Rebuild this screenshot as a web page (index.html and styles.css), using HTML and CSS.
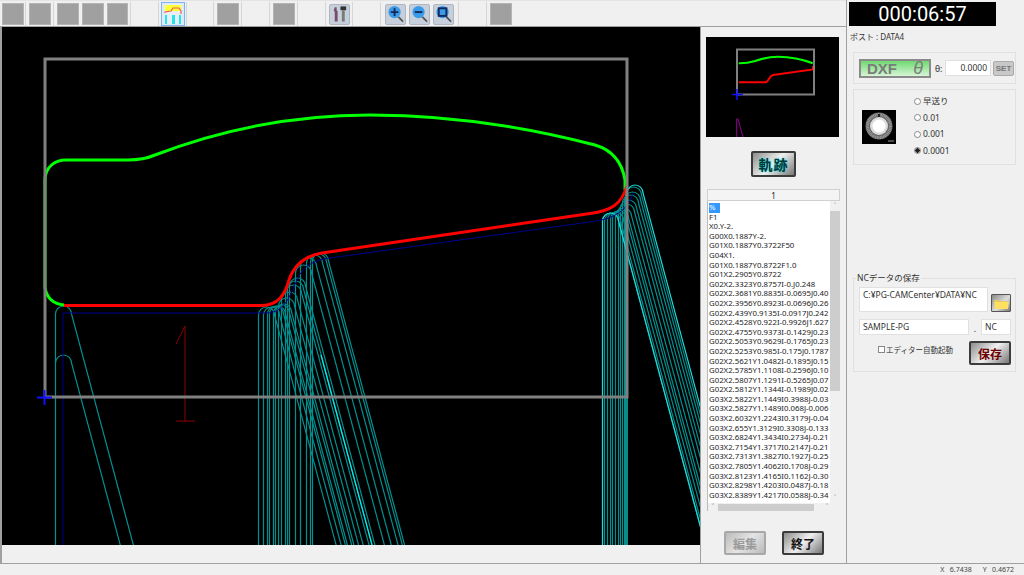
FILE: index.html
```
<!DOCTYPE html>
<html lang="ja">
<head>
<meta charset="utf-8">
<title>PG-CAM</title>
<link rel="stylesheet" href="styles.css">
</head>
<body>
<div class="window">
  <div class="main">
    <div class="left">
      <div class="toolbar">
        <div class="slot s26"><span class="gbtn"></span></div>
        <div class="slot s28"><span class="gbtn"></span></div>
        <div class="slot s77"><span class="gbtn"></span><span class="gbtn"></span><span class="gbtn w21"></span></div>
        <div class="slot s28"></div>
        <div class="slot s28">
          <span class="tbtn active">
            <svg width="18" height="20" viewBox="0 0 18 20"><rect width="18" height="20" fill="#e8eef6"/><path d="M1 1h16v6H1z" fill="#ffff33"/><path d="M1 11h2v9H1zM8 11h3v9H8zM15 11h2v9h-2z" fill="#22e4ee"/><path d="M1 9V8l6-1 2-3h6l2 3v3" fill="none" stroke="#f05a50" stroke-width="1.2"/></svg>
          </span>
        </div>
        <div class="slot s27"></div>
        <div class="slot s28"><span class="gbtn"></span></div>
        <div class="slot s28"></div>
        <div class="slot s28"><span class="gbtn"></span></div>
        <div class="slot s28"></div>
        <div class="slot s27">
          <span class="tbtn plain">
            <svg width="20" height="20" viewBox="0 0 20 20"><path d="M5 3h2v3l1 1v11H5V8L4 6z" fill="#7a4a68"/><rect x="11" y="2" width="6" height="4" fill="#333"/><rect x="12.500" y="6" width="3" height="12" fill="#7c7c74"/></svg>
          </span>
        </div>
        <div class="slot s28"></div>
        <div class="slot s78">
          <span class="tbtn plain">
            <svg width="20" height="20" viewBox="0 0 20 20"><path d="M13 13l5 5" stroke="#555" stroke-width="2"/><circle cx="9" cy="8" r="6.500" fill="#3a9be8"/><path d="M5 8h8M9 4v8" stroke="#14285a" stroke-width="2"/></svg>
          </span>
          <span class="tbtn plain">
            <svg width="20" height="20" viewBox="0 0 20 20"><path d="M13 13l5 5" stroke="#555" stroke-width="2"/><circle cx="9" cy="8" r="6.500" fill="#3a9be8"/><path d="M5 8h8" stroke="#14285a" stroke-width="2"/></svg>
          </span>
          <span class="tbtn plain">
            <svg width="20" height="20" viewBox="0 0 20 20"><path d="M13 13l5 5" stroke="#555" stroke-width="2"/><circle cx="9" cy="8" r="6.500" fill="#3a9be8"/><rect x="5" y="4" width="8" height="8" fill="none" stroke="#14285a" stroke-width="2"/></svg>
          </span>
        </div>
        <div class="slot s28"></div>
        <div class="slot s27 last"><span class="gbtn"></span></div>
      </div>
      <div class="work">
        <svg class="canvas" width="698" height="518" viewBox="2 27 698 518">
          <defs>
            <path id="a" d="M0 620V8A8 8 0 0 1 16 8L180 620"/>
            <path id="b" d="M0 8A8 8 0 0 1 16 8L180 620"/>
          </defs>
          <rect x="2" y="27" width="698" height="518" fill="#000"/>
          <g class="teal">
            <use href="#a" x="55.500" y="306"/>
            <use href="#b" x="55.500" y="355"/>
            <use href="#a" x="258.500" y="307"/><use href="#a" x="263.500" y="307"/><use href="#a" x="267.500" y="306"/>
            <use href="#a" x="269.500" y="306"/><use href="#a" x="273.500" y="305"/><use href="#a" x="275.500" y="304"/>
            <use href="#a" x="278.500" y="298"/><use href="#a" x="281.500" y="292"/><use href="#a" x="285.500" y="285"/>
            <use href="#a" x="287.500" y="281"/><use href="#a" x="289.500" y="278"/><use href="#a" x="295.500" y="265"/>
            <use href="#a" x="300.500" y="258"/><use href="#a" x="306.500" y="255"/><use href="#a" x="310.500" y="254"/>
            <use href="#a" x="312.500" y="253"/>
            <use href="#a" x="602.500" y="213"/><use href="#a" x="604.500" y="213"/><use href="#a" x="607.500" y="212"/>
            <use href="#a" x="610.500" y="211"/><use href="#a" x="612.500" y="210"/>
            <use href="#a" x="615.500" y="208"/><use href="#a" x="618.500" y="204"/><use href="#a" x="620.500" y="200"/>
            <use href="#a" x="622.500" y="195"/><use href="#a" x="624.500" y="192"/><use href="#a" x="625.500" y="187"/>
          </g>
          <g class="bright">
            <use href="#a" x="602.500" y="213"/><use href="#a" x="627" y="185"/>
          </g>
          <path class="highlight" d="M321 355L333 400L372 545"/>
          <path class="navy" d="M63 545V313H266C285 313 290 295 297 280C303 265 315 260 330 258L590 222C615 219 628 210 633 193"/>
          <path class="darkred" d="M176 344L185 326V421M176 421H195"/>
          <path class="green" d="M64 305C54 304 47 298 45 288V180C45 168 54 160 66 160H128C140 160 148 158 155 155C220 130 290 115 370 115C450 115 530 128 595 145C612 150 622 162 625 180V190"/>
          <path class="red" d="M64 305.500H262C278 305 285 295 289 280C294 265 305 256 322 253L590 213.500C610 211 622 205 627 185"/>
          <rect class="frame" x="45" y="59" width="582" height="338"/>
          <path class="cross" d="M37 397.500H52M44.500 390V405"/>
        </svg>
        <div class="mid">
          <svg class="mini" width="133" height="100" viewBox="706 37 133 100">
            <rect x="706" y="37" width="133" height="100" fill="#000"/>
            <path class="m-purple" d="M736.700 137V119H738L743 137"/>
            <path class="m-green" d="M738.700 63.300C745 63.500 750 62.500 755 61C765 57.500 772 56.700 778 56.700C790 56.700 802 59 812.700 63.300"/>
            <path class="m-red" d="M738.700 82.300H766C769 81 769 76 773 75L813 69.500V66"/>
            <rect class="m-frame" x="737" y="49.500" width="77" height="45"/>
            <path class="m-cross" d="M732 94.500H743M737 89V100"/>
          </svg>
          <div class="center-btn"><button class="hbtn trace">軌跡</button></div>
          <div class="listbox">
            <div class="list-head">1</div>
            <div class="list-body">
              <div class="rows">
                <div class="row"><span class="sel">%</span></div>
                <div class="row">F1</div>
                <div class="row">X0.Y-2.</div>
                <div class="row">G00X0.1887Y-2.</div>
                <div class="row">G01X0.1887Y0.3722F50</div>
                <div class="row">G04X1.</div>
                <div class="row">G01X0.1887Y0.8722F1.0</div>
                <div class="row">G01X2.2905Y0.8722</div>
                <div class="row">G02X2.3323Y0.8757I-0.J0.248</div>
                <div class="row">G02X2.3681Y0.8835I-0.0695J0.40</div>
                <div class="row">G02X2.3956Y0.8923I-0.0696J0.26</div>
                <div class="row">G02X2.439Y0.9135I-0.0917J0.242</div>
                <div class="row">G02X2.4528Y0.922I-0.9926J1.627</div>
                <div class="row">G02X2.4755Y0.9373I-0.1429J0.23</div>
                <div class="row">G02X2.5053Y0.9629I-0.1765J0.23</div>
                <div class="row">G02X2.5253Y0.985I-0.175J0.1787</div>
                <div class="row">G02X2.5621Y1.0482I-0.1895J0.15</div>
                <div class="row">G02X2.5785Y1.1108I-0.2596J0.10</div>
                <div class="row">G02X2.5807Y1.1291I-0.5265J0.07</div>
                <div class="row">G02X2.5812Y1.1344I-0.1989J0.02</div>
                <div class="row">G03X2.5822Y1.1449I0.3988J-0.03</div>
                <div class="row">G03X2.5827Y1.1489I0.068J-0.006</div>
                <div class="row">G03X2.6032Y1.2243I0.3179J-0.04</div>
                <div class="row">G03X2.655Y1.3129I0.3308J-0.133</div>
                <div class="row">G03X2.6824Y1.3434I0.2734J-0.21</div>
                <div class="row">G03X2.7154Y1.3717I0.2147J-0.21</div>
                <div class="row">G03X2.7313Y1.3827I0.1927J-0.25</div>
                <div class="row">G03X2.7805Y1.4062I0.1708J-0.29</div>
                <div class="row">G03X2.8123Y1.4165I0.1162J-0.30</div>
                <div class="row">G03X2.8298Y1.4203I0.0487J-0.18</div>
                <div class="row">G03X2.8389Y1.4217I0.0588J-0.34</div>
              </div>
              <div class="vscroll">
                <span class="arrow">&#708;</span>
                <span class="vthumb"></span>
                <span class="arrow">&#709;</span>
              </div>
              <div class="hscroll">
                <span class="arrow">&#706;</span>
                <span class="hthumb"></span>
                <span class="arrow">&#707;</span>
              </div>
            </div>
          </div>
          <div class="bottom-btns">
            <button class="hbtn disabled">編集</button>
            <button class="hbtn end">終了</button>
          </div>
        </div>
      </div>
    </div>
    <div class="right">
      <div class="timer">000:06:57</div>
      <div class="post">ポスト : DATA4</div>
      <div class="group g-theta">
        <div class="dxf"><b>DXF</b><i>θ</i></div>
        <span class="theta-label">θ:</span>
        <div class="field theta-value">0.0000</div>
        <button class="set">SET</button>
      </div>
      <div class="group g-dial">
        <svg class="dial" width="34" height="34" viewBox="0 0 34 34">
          <rect width="34" height="34" fill="#000"/>
          <circle cx="17" cy="16" r="13.500" fill="#666"/>
          <circle cx="17" cy="16" r="11.500" fill="none" stroke="#999" stroke-width="3" stroke-dasharray="1 .6"/>
          <circle cx="17" cy="16" r="9" fill="#dcdcdc"/>
          <circle cx="17" cy="16" r="6.500" fill="#fff"/>
          <rect x="16" y="4" width="2" height="3" fill="#222"/>
          <path d="M26 31h6" stroke="#999"/>
        </svg>
        <div class="radios">
          <div class="radio"><span class="dot"></span>早送り</div>
          <div class="radio"><span class="dot"></span>0.01</div>
          <div class="radio"><span class="dot"></span>0.001</div>
          <div class="radio"><span class="dot on"></span>0.0001</div>
        </div>
      </div>
      <div class="group g-save">
        <span class="legend">NCデータの保存</span>
        <div class="path-row">
          <div class="field path">C:¥PG-CAMCenter¥DATA¥NC</div>
          <button class="folder">
            <svg width="15" height="11" viewBox="0 0 15 11"><path d="M0 2h5l1 1h7v2H0z" fill="#e8c860"/><path d="M0 4h15l-1 7H1z" fill="#ffe060"/></svg>
          </button>
        </div>
        <div class="name-row">
          <div class="field name">SAMPLE-PG</div>
          <span class="dotsep">.</span>
          <div class="field ext">NC</div>
        </div>
        <div class="save-row">
          <div class="check"><span class="box"></span>エディター自動起動</div>
          <button class="hbtn save">保存</button>
        </div>
      </div>
    </div>
  </div>
  <div class="status"><span>X&nbsp;&nbsp;&nbsp;6.7438</span><span>Y&nbsp;&nbsp;&nbsp;0.4672</span></div>
</div>
</body>
</html>
```

FILE: styles.css
```
* { box-sizing: border-box; }
html, body { margin: 0; padding: 0; }
body {
  width: 1024px; height: 575px; overflow: hidden;
  background: #f0f0f0; color: #222;
  font-family: "Noto Sans", "Noto Sans CJK JP", sans-serif; font-size: 8.500px;
}
.window { display: flex; flex-direction: column; height: 575px; }
.main { display: flex; height: 564px; border-bottom: 1px solid #a0a0a0; }
.left { flex: none; width: 847px; display: flex; flex-direction: column; border-right: 1px solid #a0a0a0; }
.toolbar { height: 27px; display: flex; padding-top: 1px; border-top: 1px solid #e4e4e4; border-bottom: 1px solid #a0a0a0; }
.slot { height: 24px; display: flex; align-items: center; justify-content: center; gap: 3px; border-right: 1px solid #d6d6d6; }
.slot.last { border-right: 0; }
.s26 { width: 26px; } .s27 { width: 27px; } .s28 { width: 28px; } .s77 { width: 77px; } .s78 { width: 78px; }
.gbtn { width: 22px; height: 22px; background: #a0a0a0; border: 1px solid #b4b4b4; }
.gbtn.w21 { width: 21px; }
.tbtn { display: flex; align-items: center; justify-content: center; }
.tbtn.active { width: 24px; height: 24px; background: #dce9f7; border: 1px solid #7fb4ea; }
.tbtn.plain { width: 21px; height: 21px; background: #c6cfdc; border: 1px solid #b0b6c0; border-radius: 2px; }
.work { flex: 1; display: flex; min-height: 0; border-left: 2px solid #a0a0a0; }
.canvas { display: block; flex: none; }
.teal use { fill: none; stroke: #009090; stroke-width: 1.200; }
.bright use { fill: none; stroke: #20d8d8; stroke-width: 1.200; }
.highlight { fill: none; stroke: #00f0f0; stroke-width: 1.200; }
.navy { fill: none; stroke: #000090; stroke-width: 1; }
.darkred { fill: none; stroke: #8b0000; stroke-width: 1; }
.green { fill: none; stroke: #00ff00; stroke-width: 3; }
.red { fill: none; stroke: #ff0000; stroke-width: 3; }
.frame { fill: none; stroke: #808080; stroke-width: 3; }
.cross { fill: none; stroke: #1010ff; stroke-width: 2; }
.mid { flex: 1; min-width: 0; display: flex; flex-direction: column; padding: 10px 1px 0 5px; border-left: 1px solid #a0a0a0; }
.mini { display: block; flex: none; }
.m-purple { fill: none; stroke: #900090; stroke-width: 1; }
.m-green { fill: none; stroke: #00ff00; stroke-width: 2; }
.m-red { fill: none; stroke: #ff0000; stroke-width: 2; }
.m-frame { fill: none; stroke: #808080; stroke-width: 2; }
.m-cross { fill: none; stroke: #1010ff; stroke-width: 1.500; }
.center-btn { display: flex; justify-content: center; margin-top: 14px; padding-right: 4px; }
.hbtn {
  font-family: "Noto Sans CJK JP", sans-serif; font-weight: 700; padding: 0;
  border: 2px solid #3c3c3c; border-radius: 2px;
  background: linear-gradient(135deg, #8c8c8c, #f0f0f0 50%, #777);
  color: #111;
}
.trace { width: 45px; height: 26px; font-size: 14px; color: #063838; text-shadow: 0 0 2px #00e0e0; letter-spacing: 1px; }
.listbox { width: 133px; height: 322px; margin-top: 12px; margin-left: 1px; display: flex; flex-direction: column; }
.list-head { height: 12px; line-height: 11px; text-align: center; font-size: 8px; background: #f4f4f4; border: 1px solid #d0d0d0; }
.list-body {
  flex: none; height: 310px; width: 133px; background: #fff; border-left: 1px solid #bbb;
  display: grid; grid-template-columns: 122px 10px; grid-template-rows: 302px 8px;
}
.rows { overflow: hidden; padding-left: 1px; padding-top: 2px; }
.row { height: 9.600px; line-height: 9.600px; white-space: nowrap; font-size: 7.800px; font-family: "Noto Sans", sans-serif; color: #1c1c1c; }
.sel { display: inline-block; width: 11px; background: #3399ff; color: #fff; }
.vscroll { background: #f0f0f0; display: flex; flex-direction: column; align-items: stretch; text-align: center; }
.vthumb { height: 180px; background: #cdcdcd; flex: none; }
.hscroll { grid-column: 1 / 3; background: #f0f0f0; display: flex; align-items: center; }
.arrow { flex: none; font-size: 7px; line-height: 10px; width: 10px; text-align: center; color: #555; }
.vscroll .arrow:last-child { margin-top: auto; }
.hthumb { width: 96px; height: 7px; background: #cdcdcd; margin: 0 8px 0 0; }
.bottom-btns { display: flex; gap: 16px; margin-top: 20px; padding-left: 18px; }
.bottom-btns .hbtn { width: 42px; height: 24px; font-size: 12px; }
.disabled { border-color: #a8a8a8; color: #9a9a9a; background: linear-gradient(135deg, #bbb, #e4e4e4 50%, #bbb); }
.right { flex: none; width: 177px; display: flex; flex-direction: column; padding: 2px 8px 0 2px; }
.timer { width: 147px; height: 24px; background: #000; color: #fff; font: 20px/24px Roboto, sans-serif; text-align: center; }
.post { margin-top: 5px; margin-left: 1px; font-size: 8px; line-height: 12px; color: #333; }
.group { border: 1px solid #e0e0e0; margin-left: 4px; width: 163px; }
.g-theta { height: 32px; margin-top: 9px; display: flex; align-items: center; padding-left: 5px; }
.dxf {
  width: 72px; height: 19px; border: 2px solid #8a8a8a; background: linear-gradient(180deg, #6fd96f, #d6f5d6);
  display: flex; justify-content: space-between; align-items: center; padding: 0 6px 0 6px;
  font: 700 15px/15px "Liberation Sans", sans-serif; color: #7c7c7c;
}
.dxf i { font-size: 18px; font-weight: 400; }
.theta-label { margin-left: 4px; width: 10px; font-size: 8.500px; }
.field { background: #fff; border: 1px solid #e0e0e0; font-size: 8.500px; color: #333; }
.theta-value { width: 46px; height: 16px; line-height: 14px; text-align: right; padding-right: 3px; }
.set { width: 21px; height: 15px; margin-left: 2px; padding: 0; font: 700 8px/11px "Liberation Sans", sans-serif; color: #777; background: #c8c8c8; border: 1px solid #aaa; border-radius: 2px; }
.g-dial { height: 76px; margin-top: 5px; display: flex; padding: 3px 0 0 8px; }
.dial { margin-top: 17px; flex: none; }
.radios { margin-left: 18px; display: flex; flex-direction: column; }
.radio { height: 16.500px; line-height: 16px; display: flex; align-items: center; gap: 2px; font-size: 8.500px; color: #333; }
.dot { width: 7px; height: 7px; border: 1px solid #888; border-radius: 50%; background: #fff; flex: none; }
.dot.on { background: radial-gradient(circle, #222 0 2px, #fff 2.500px); }
.g-save { margin-top: 113px; height: 94px; position: relative; padding: 8px 4px 0 5px; }
.legend { position: absolute; left: 2px; top: -7px; background: #f0f0f0; padding: 0 1px; font-size: 8.500px; line-height: 11px; color: #333; }
.path-row { display: flex; align-items: flex-end; gap: 3px; }
.path { width: 130px; height: 25px; padding: 1px 3px; line-height: 12px; white-space: nowrap; overflow: hidden; }
.folder { width: 20px; height: 18px; padding: 0; border: 1px solid #555; border-radius: 1px; background: linear-gradient(135deg, #888, #ddd 55%, #777); display: flex; align-items: center; justify-content: center; }
.name-row { display: flex; margin-top: 7px; align-items: flex-end; }
.name { width: 110px; height: 16px; padding: 0 3px; line-height: 14px; }
.dotsep { width: 12px; text-align: center; line-height: 12px; }
.ext { width: 30px; height: 16px; padding: 0 3px; line-height: 14px; }
.save-row { display: flex; justify-content: space-between; margin-top: 6px; padding-left: 19px; }
.check { display: flex; align-items: center; height: 16px; gap: 1px; font-size: 7.500px; color: #333; white-space: nowrap; }
.box { width: 7px; height: 7px; border: 1px solid #888; background: #fff; }
.save { width: 42px; height: 24px; font-size: 12px; color: #6e0000; }
.status { height: 11px; display: flex; justify-content: flex-end; gap: 11px; padding-right: 10px; font-size: 7px; line-height: 11px; color: #444; }
```
